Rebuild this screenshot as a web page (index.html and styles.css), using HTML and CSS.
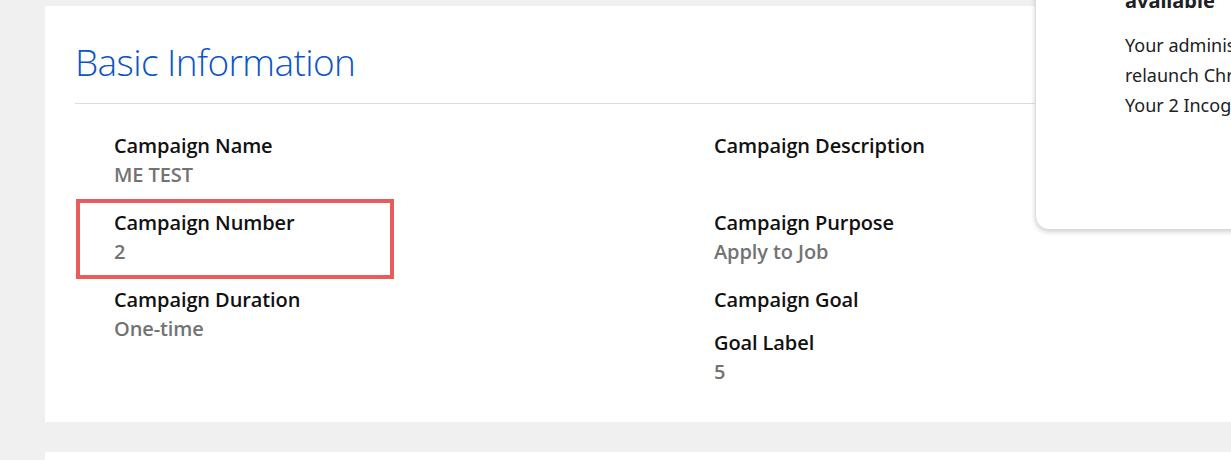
FILE: index.html
```html
<!DOCTYPE html>
<html>
<head>
<meta charset="utf-8">
<link rel="stylesheet" href="styles.css">
</head>
<body>
<div class="page">
  <section class="card">
    <h1 class="title">Basic Information</h1>
    <div class="divider"></div>
    <div class="grid">
      <div class="col">
        <div class="item">
          <div class="label">Campaign Name</div>
          <div class="value">ME TEST</div>
        </div>
        <div class="item highlighted">
          <div class="label">Campaign Number</div>
          <div class="value">2</div>
        </div>
        <div class="item">
          <div class="label">Campaign Duration</div>
          <div class="value">One-time</div>
        </div>
      </div>
      <div class="col">
        <div class="item">
          <div class="label">Campaign Description</div>
          <div class="value"></div>
        </div>
        <div class="item">
          <div class="label">Campaign Purpose</div>
          <div class="value">Apply to Job</div>
        </div>
        <div class="item no-value">
          <div class="label">Campaign Goal</div>
        </div>
        <div class="item">
          <div class="label">Goal Label</div>
          <div class="value">5</div>
        </div>
      </div>
    </div>
  </section>
  <section class="card next"></section>
</div>
<div class="popup">
  <div class="popup-title">Chrome update<br>available</div>
  <p class="popup-text">Your administrator asks that you</p>
  <p class="popup-text">relaunch Chrome to apply this update.</p>
  <p class="popup-text">Your 2 Incognito windows won't reopen.</p>
</div>
</body>
</html>
```

FILE: styles.css
```css
html, body {
  margin: 0;
  padding: 0;
}
body {
  background: #f0f0f0;
  width: 1231px;
  height: 460px;
  overflow: hidden;
  position: relative;
  font-family: "Open Sans", "Noto Sans", sans-serif;
}
.page {
  padding-top: 6px;
  padding-left: 45px;
}
.card {
  background: #ffffff;
  width: 1250px;
  height: 416px;
  box-sizing: border-box;
  padding: 32px 0 0 30px;
}
.card.next {
  margin-top: 30px;
  height: 100px;
}
.title {
  margin: 0;
  font-weight: 300;
  font-size: 37px;
  line-height: 48px;
  color: #0b55c8;
  letter-spacing: -0.6px;
}
.divider {
  height: 1px;
  background: #d9dde2;
  margin-top: 17px;
}
.grid {
  display: grid;
  grid-template-columns: 600px 1fr;
  padding-left: 39px;
  padding-top: 27px;
}
.item {
  position: relative;
  margin-bottom: 19px;
}
.item.no-value {
  margin-bottom: 14px;
}
.label {
  font-size: 20px;
  font-weight: 600;
  line-height: 29px;
  color: #111111;
  letter-spacing: -0.1px;
}
.value {
  font-size: 20px;
  font-weight: 600;
  line-height: 29px;
  min-height: 29px;
  color: #737373;
  letter-spacing: -0.1px;
}
.highlighted::after {
  content: "";
  position: absolute;
  left: -38px;
  top: -9px;
  width: 318px;
  height: 80px;
  box-sizing: border-box;
  border: 4px solid #e95c5c;
}
.popup {
  position: absolute;
  left: 1035px;
  top: -70px;
  width: 400px;
  height: 300px;
  box-sizing: border-box;
  background: #ffffff;
  border: 1px solid #dadce0;
  border-radius: 14px;
  box-shadow: 0 2px 5px rgba(0,0,0,0.18);
  padding: 28px 0 0 89px;
  color: #202124;
  font-family: "Noto Sans", "Open Sans", sans-serif;
}
.popup-title {
  font-size: 20px;
  font-weight: 700;
  line-height: 28px;
  margin-bottom: 15px;
}
.popup-text {
  margin: 0;
  font-size: 18px;
  line-height: 30px;
  white-space: nowrap;
}
```
